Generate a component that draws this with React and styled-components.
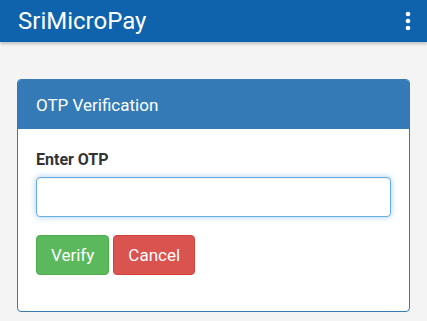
import React, { useState } from 'react'
import styled, { createGlobalStyle } from 'styled-components'

const GlobalStyle = createGlobalStyle`
  html, body {
    margin: 0;
    padding: 0;
    background: #f4f4f4;
    font-family: Roboto, 'Liberation Sans', Arial, sans-serif;
  }
`

export default function App() {
  const [otp, setOtp] = useState('')

  return (
    <>
      <GlobalStyle />
      <AppBar>
        <Brand>SriMicroPay</Brand>
        <MenuButton aria-label='menu'>
          <svg width='6' height='20' viewBox='0 0 6 20'>
            <circle cx='3' cy='3' r='2.3' fill='#fff' />
            <circle cx='3' cy='10' r='2.3' fill='#fff' />
            <circle cx='3' cy='17' r='2.3' fill='#fff' />
          </svg>
        </MenuButton>
      </AppBar>
      <Content>
        <Panel>
          <PanelHeading>OTP Verification</PanelHeading>
          <PanelBody>
            <Label htmlFor='otp'>Enter OTP</Label>
            <Input id='otp' value={otp} onChange={e => setOtp(e.target.value)} />
            <Actions>
              <Button color='#5cb85c' border='#4cae4c'>Verify</Button>
              <Button color='#d9534f' border='#d43f3a'>Cancel</Button>
            </Actions>
          </PanelBody>
        </Panel>
      </Content>
    </>
  )
}

const AppBar = styled.header`
  display: flex;
  align-items: center;
  justify-content: space-between;
  height: 42px;
  padding: 0 18px;
  background: #0f63ad;
  box-shadow: 0 2px 3px rgba(0, 0, 0, .22);
  position: relative;
`

const Brand = styled.h1`
  margin: 0;
  color: #fff;
  font-size: 24px;
  font-weight: 400;
`

const MenuButton = styled.button`
  display: flex;
  align-items: center;
  background: none;
  border: 0;
  padding: 0;
  margin-right: -2px;
`

const Content = styled.main`
  padding: 37px 17px 0;
`

const Panel = styled.section`
  border: 1px solid #337ab7;
  border-radius: 4px;
  background: #fff;
  overflow: hidden;
`

const PanelHeading = styled.div`
  display: flex;
  align-items: center;
  height: 49px;
  padding: 0 18px;
  background: #337ab7;
  color: #fff;
  font-size: 17px;
`

const PanelBody = styled.div`
  display: flex;
  flex-direction: column;
  padding: 20px 18px 36px;
`

const Label = styled.label`
  color: #333;
  font-size: 16px;
  font-weight: 700;
  line-height: 22px;
  margin-bottom: 6px;
`

const Input = styled.input`
  box-sizing: border-box;
  height: 40px;
  width: 100%;
  border: 1px solid #66afe9;
  border-radius: 4px;
  box-shadow: inset 0 1px 1px rgba(0,0,0,.075), 0 0 6px rgba(102,175,233,.6);
  outline: none;
  font-size: 16px;
  padding: 6px 12px;
`

const Actions = styled.div`
  display: flex;
  gap: 4px;
  margin-top: 18px;
`

const Button = styled.button`
  height: 40px;
  padding: 0 14px;
  border: 1px solid ${p => p.border};
  border-radius: 4px;
  background: ${p => p.color};
  color: #fff;
  font-family: inherit;
  font-size: 17px;
`
